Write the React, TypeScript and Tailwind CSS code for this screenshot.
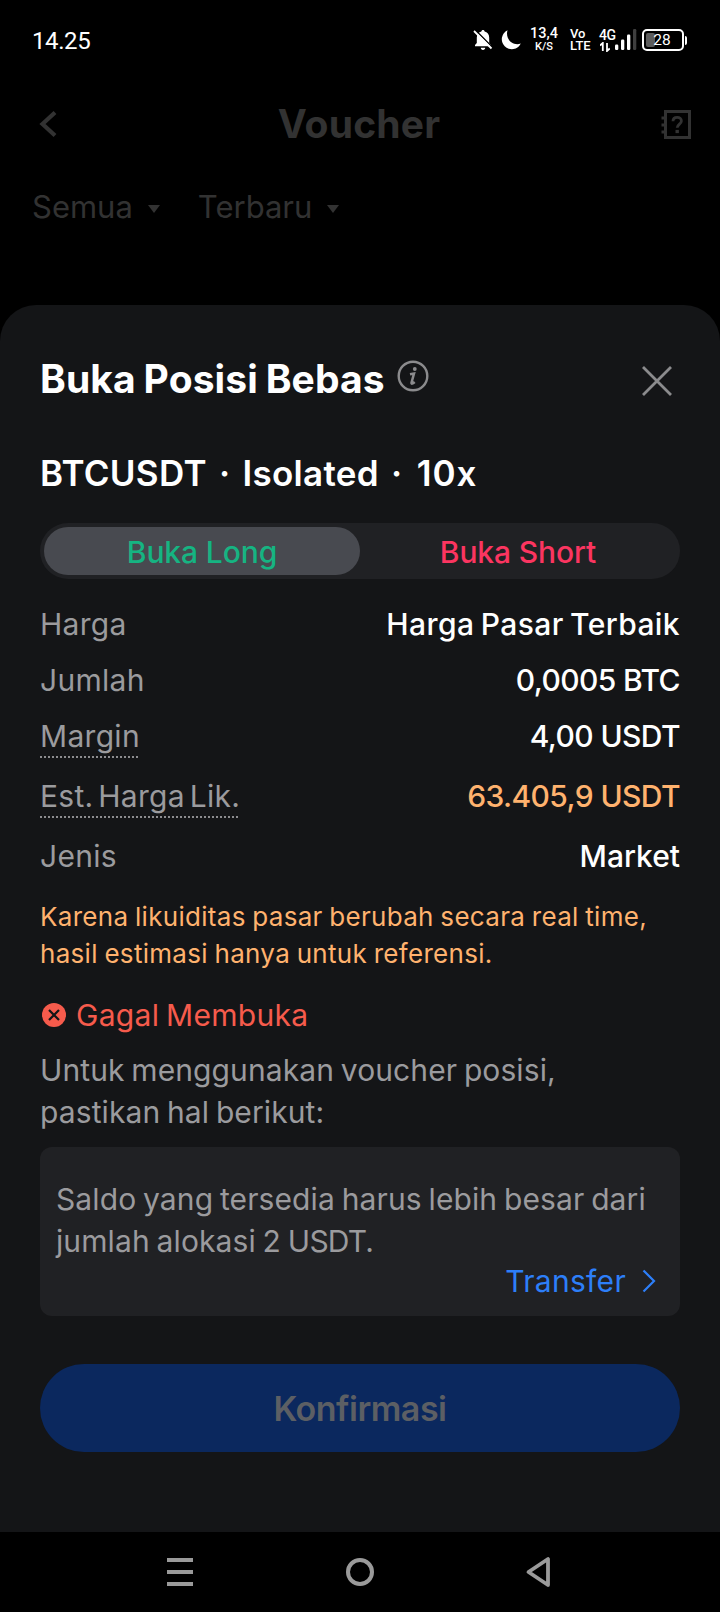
import type { ReactNode } from 'react';

function BellOffIcon() {
  return (
    <svg width="20" height="22" viewBox="0 0 20 22" fill="none">
      <path
        d="M10 1c.9 0 1.6.6 1.6 1.5 2.700.7 4.600 2.900 4.600 6v5.500l1.800 2v1.200H2V16l1.800-2V8.500c0-3.100 1.900-5.300 4.600-6C8.400 1.600 9.100 1 10 1z"
        fill="#fff"
      />
      <path d="M7.800 18.700h4.400c0 1.300-.9 2.200-2.200 2.200s-2.200-.9-2.200-2.200z" fill="#fff" />
      <path d="M2.500 1.300l17 17" stroke="#000" strokeWidth="1.600" />
      <path d="M1 2l17.500 17.500" stroke="#fff" strokeWidth="1.800" />
    </svg>
  );
}

function MoonIcon() {
  return (
    <svg width="22" height="22" viewBox="0 0 22 22">
      <path d="M7.500 1.200A10 10 0 1 0 20.800 14.600C12.500 17.300 5 10 7.500 1.200z" fill="#fff" />
    </svg>
  );
}

function SignalIcon() {
  return (
    <svg width="22" height="22" viewBox="0 0 22 22">
      <rect x="0" y="15.500" width="3.300" height="5.500" rx="1.200" fill="#fff" />
      <rect x="6" y="10.500" width="3.300" height="10.500" rx="1.200" fill="#fff" />
      <rect x="12" y="5.500" width="3.300" height="15.500" rx="1.200" fill="#fff" />
      <rect x="18" y="0" width="3.300" height="21" rx="1.200" fill="#3f3f3f" />
    </svg>
  );
}

function StatusBar() {
  return (
    <div className="flex h-20 items-center pl-8 pr-[33px] font-['Roboto',sans-serif] text-white">
      <span className="mt-px text-[24px] leading-[30px] tracking-[-0.4px]">14.25</span>
      <div className="ml-auto flex items-center">
        <BellOffIcon />
        <div className="ml-[7px] flex">
          <MoonIcon />
        </div>
        <div className="ml-[8px] flex w-[28px] flex-col items-center whitespace-nowrap pb-[2px] font-medium">
          <span className="text-[14.5px] leading-[14px]">13,4</span>
          <span className="text-[11px] leading-[11px]">K/S</span>
        </div>
        <div className="ml-[12px] flex w-[21px] flex-col whitespace-nowrap text-[13px] font-medium leading-[12px]">
          <span>Vo</span>
          <span>LTE</span>
        </div>
        <div className="ml-[8px] flex w-[16px] flex-col whitespace-nowrap text-[14px] font-medium leading-[13px] tracking-[-0.5px]">
          <span>4G</span>
          <svg className="ml-px" width="10" height="10" viewBox="0 0 10 10" fill="none" stroke="#fff" strokeWidth="1.800">
            <path d="M0 3.500L2.800 1v8M9.800 6.500L7 9V1" />
          </svg>
        </div>
        <SignalIcon />
        <div className="ml-[5px] flex items-center">
          <div className="relative flex h-[22px] w-[42px] items-center justify-center rounded-[5px] border-2 border-white">
            <div className="absolute left-[2px] top-[2px] h-[14px] w-[9px] rounded-[2px] bg-[#5c5c5c]" />
            <span className="relative mr-[2px] text-[15.5px] leading-[18px]">28</span>
          </div>
          <div className="ml-px h-[9px] w-[2px] rounded-r bg-white" />
        </div>
      </div>
    </div>
  );
}

function PageHeader() {
  return (
    <div className="flex h-[88px] items-center justify-between pl-[38px] pr-[28px] text-[#323232]">
      <svg width="20" height="28" viewBox="0 0 20 28" fill="none" stroke="currentColor" strokeWidth="4.200">
        <path d="M17 2.500L4.500 14 17 25.500" />
      </svg>
      <h1 className="text-[39px] font-bold leading-[48px] tracking-[0.2px]">Voucher</h1>
      <svg className="mt-[2px]" width="32" height="32" viewBox="0 0 32 32" fill="none" stroke="currentColor">
        <path d="M5.500 2.500h24v26h-24z" strokeWidth="3" />
        <path d="M1.500 9h5M1.500 16h5M1.500 23h5" strokeWidth="2.800" />
        <path d="M13 12.200c0-2.400 1.800-3.900 4.200-3.900s4.200 1.500 4.200 3.700c0 3-4.200 3.200-4.200 6.800" strokeWidth="2.800" />
        <path d="M15.500 22.500h3.400" strokeWidth="3.200" />
      </svg>
    </div>
  );
}

function Filter({ label }: { label: string }) {
  return (
    <div className="flex items-center">
      <span>{label}</span>
      <svg className="ml-[15px] mt-[3px]" width="12" height="8" viewBox="0 0 12 8">
        <path d="M0 0h12L6 8z" fill="currentColor" />
      </svg>
    </div>
  );
}

function Row({
  label,
  hint,
  valueClass,
  children,
}: {
  label: string;
  hint?: boolean;
  valueClass: string;
  children: ReactNode;
}) {
  return (
    <div className={hint ? 'flex h-[60px] justify-between' : 'flex h-[56px] justify-between'}>
      <span className="flex flex-col tracking-[0.3px] text-[#9b9b9e] [word-spacing:-4px]">
        <span className="h-[48px] leading-[56px]">{label}</span>
        {hint && <span className="h-[2px] bg-[repeating-linear-gradient(90deg,#8c8c8f_0_2px,transparent_2px_4px)]" />}
      </span>
      <span className={`font-medium leading-[56px] ${valueClass}`}>{children}</span>
    </div>
  );
}

function Sheet() {
  return (
    <section className="mt-[59px] rounded-t-[36px] bg-[#141517] px-10 pb-20 pt-[44px] text-[30px]">
      <div className="flex h-[60px] items-center">
        <h2 className="whitespace-nowrap text-[39px] font-bold tracking-[0.1px] text-white [word-spacing:-1.5px]">
          Buka Posisi Bebas
        </h2>
        <svg className="mb-[6px] ml-[12px]" width="32" height="32" viewBox="0 0 32 32" fill="none" stroke="#8b8b8d">
          <circle cx="16" cy="16" r="14.300" strokeWidth="2.400" />
          <circle cx="17.800" cy="9" r="1.900" fill="#8b8b8d" stroke="none" />
          <path d="M13 14.300l4-.8-2.500 9.300c-.2 1.300 1 1.200 3.200-.8" strokeWidth="2.500" />
        </svg>
        <svg className="ml-auto mr-[7px] mt-[3px]" width="32" height="32" viewBox="0 0 32 32" fill="none" stroke="#8b8b8d" strokeWidth="2.800">
          <path d="M2 2l28 28M30 2L2 30" />
        </svg>
      </div>

      <p className="mt-[44px] h-10 whitespace-nowrap text-[35px] font-semibold leading-10 tracking-[0.3px] text-white [word-spacing:3px]">
        BTCUSDT · Isolated · <span className="ml-[2px] tracking-[1px]">10x</span>
      </p>

      <div className="mt-[30px] flex h-[56px] rounded-full bg-[#202124] p-1 font-medium leading-[50px] tracking-[-0.1px]">
        <button className="flex-1 rounded-full bg-[#484a50] text-[#16b482]">Buka Long</button>
        <button className="flex-1 text-[#fb3560]">Buka Short</button>
      </div>

      <div className="mt-[17px]">
        <Row label="Harga" valueClass="text-white tracking-[0.4px] [word-spacing:-2px]">Harga Pasar Terbaik</Row>
        <Row label="Jumlah" valueClass="text-white tracking-[-0.6px]">0,0005 BTC</Row>
        <Row label="Margin" hint valueClass="text-white tracking-[-0.6px]">4,00 USDT</Row>
        <Row label="Est. Harga Lik." hint valueClass="text-[#ffb26e] tracking-[-0.6px]">63.405,9 USDT</Row>
        <Row label="Jenis" valueClass="text-white">Market</Row>
      </div>

      <p className="mt-[14px] whitespace-nowrap text-[26px] leading-[37px] tracking-[0.3px] text-[#ffb26e] [word-spacing:-1px]">
        Karena likuiditas pasar berubah secara real time,
        <br />
        hasil estimasi hanya untuk referensi.
      </p>

      <div className="mt-[22px] flex h-[42px] items-center tracking-[0.3px] text-[#f65b4c] [word-spacing:-2px]">
        <svg className="ml-[2px] mr-[10px]" width="24" height="24" viewBox="0 0 24 24">
          <circle cx="12" cy="12" r="12" fill="#f65b4c" />
          <path d="M7 7l10 10M17 7L7 17" stroke="#141517" strokeWidth="2.200" />
        </svg>
        Gagal Membuka
      </div>

      <p className="mt-[13px] whitespace-nowrap leading-[42px] tracking-[0.1px] text-[#9b9b9e] [word-spacing:-1.8px]">
        Untuk menggunakan voucher posisi,
        <br />
        pastikan hal berikut:
      </p>

      <div className="mt-[14px] rounded-xl bg-[#202124] pb-4 pl-4 pr-[23px] pt-[31px]">
        <p className="whitespace-nowrap leading-[42px] tracking-[0.1px] text-[#9b9b9e] [word-spacing:-1.7px]">
          Saldo yang tersedia harus lebih besar dari
          <br />
          jumlah alokasi 2 <span className="tracking-[-0.8px]">USDT.</span>
        </p>
        <a className="flex h-[38px] items-center justify-end tracking-[0.3px] text-[#2d7ff9]">
          Transfer
          <svg className="ml-[15px]" width="16" height="24" viewBox="0 0 16 24" fill="none" stroke="currentColor" strokeWidth="2.200">
            <path d="M2.500 1.500L13 12 2.500 22.500" />
          </svg>
        </a>
      </div>

      <button className="mt-12 block h-[88px] w-full rounded-full bg-[#0b285e] text-[34px] font-semibold tracking-[-0.5px] text-[#5c5f64]">
        Konfirmasi
      </button>
    </section>
  );
}

function NavBar() {
  return (
    <nav className="flex h-20 items-center bg-black pl-[165px]">
      <svg width="30" height="30" viewBox="0 0 30 30" fill="#9a9a9a">
        <path d="M2 1h26v4H2zM2 13h26v4H2zM2 25h26v4H2z" />
      </svg>
      <svg className="ml-[150px]" width="30" height="30" viewBox="0 0 30 30" fill="none" stroke="#9a9a9a" strokeWidth="4">
        <circle cx="15" cy="15" r="12" />
      </svg>
      <svg className="ml-[150px]" width="30" height="32" viewBox="0 0 30 32" fill="none" stroke="#9a9a9a" strokeWidth="3.800" strokeLinejoin="round">
        <path d="M23 3v26L3.500 16z" />
      </svg>
    </nav>
  );
}

export default function App() {
  return (
    <div className="w-[720px] bg-black font-['Inter',sans-serif]">
      <StatusBar />
      <PageHeader />
      <div className="flex h-[78px] items-center gap-[38px] pl-8 text-[31px] text-[#323232]">
        <Filter label="Semua" />
        <Filter label="Terbaru" />
      </div>
      <Sheet />
      <NavBar />
    </div>
  );
}
